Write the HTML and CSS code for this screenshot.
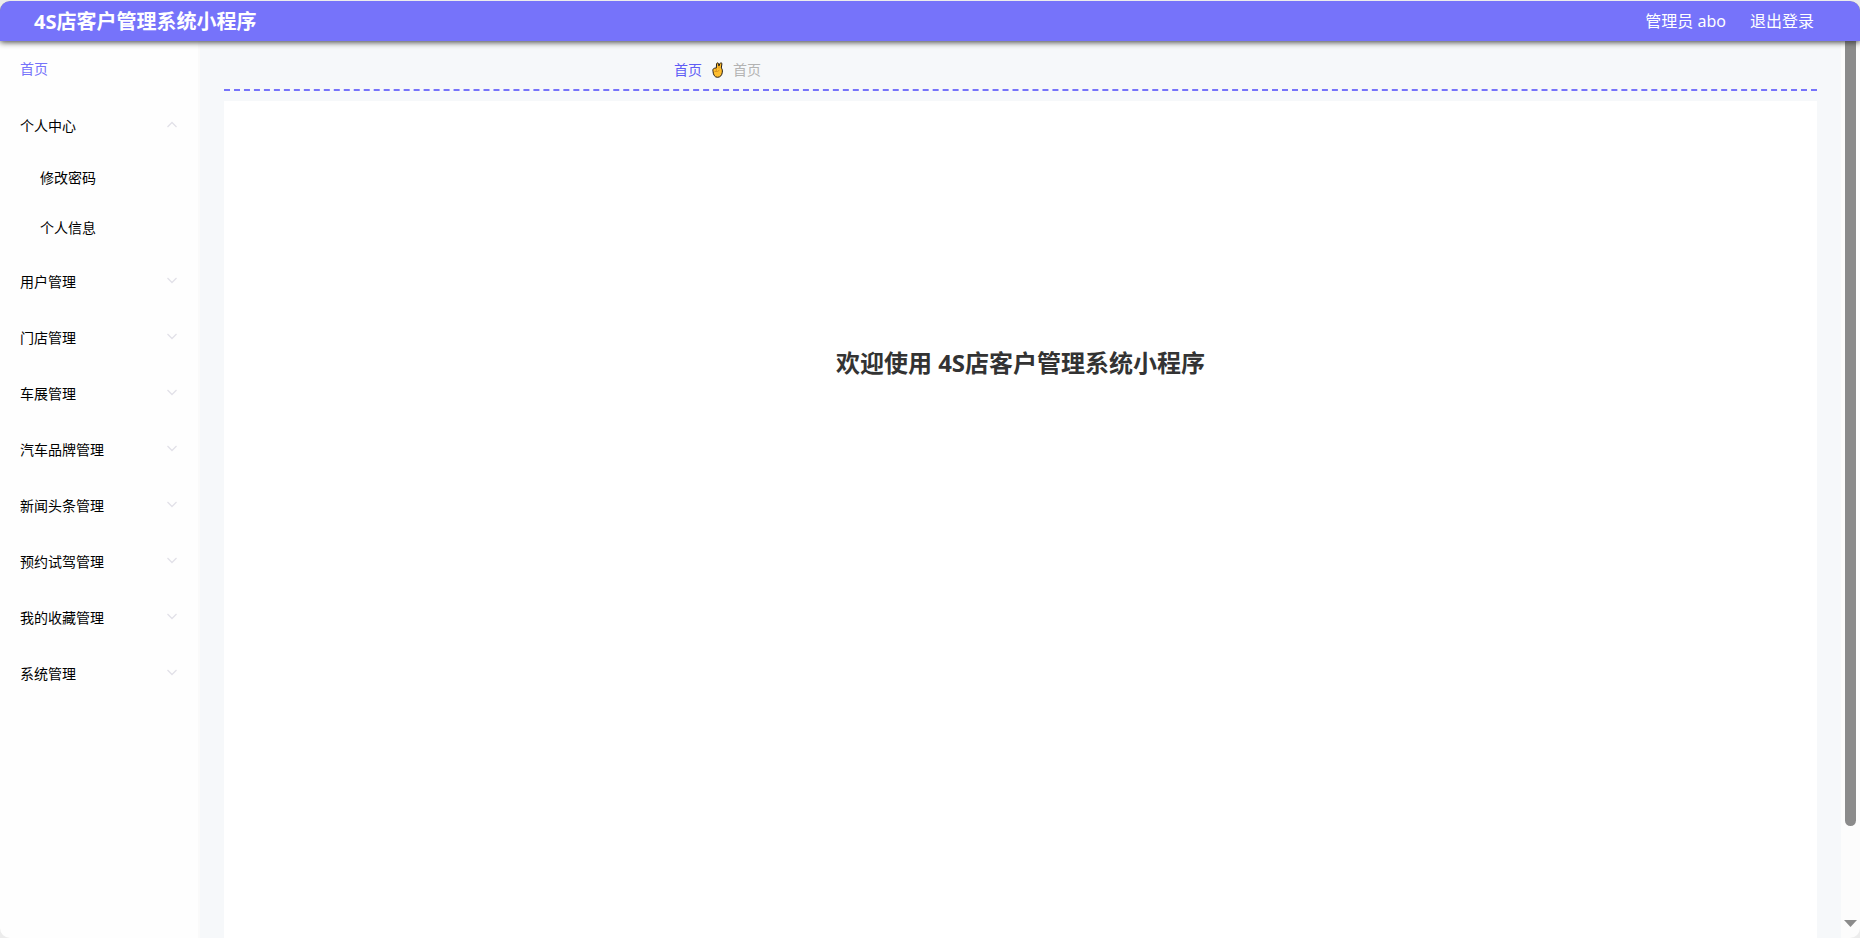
FILE: index.html
```html
<!DOCTYPE html>
<html lang="zh-CN">
<head>
<meta charset="utf-8">
<title>4S店客户管理系统小程序</title>
<link rel="stylesheet" href="styles.css">
</head>
<body>
<svg class="sprite" aria-hidden="true">
  <symbol id="down" viewBox="0 0 12 12"><path d="M1.500 3 6 7.500 10.500 3" fill="none" stroke="currentColor" stroke-width="1.300"/></symbol>
  <symbol id="up" viewBox="0 0 12 12"><path d="M1.500 8 6 3.500 10.500 8" fill="none" stroke="currentColor" stroke-width="1.300"/></symbol>
</svg>
<div class="window">
  <header class="topbar">
    <h1 class="brand">4S店客户管理系统小程序</h1>
    <div class="account">
      <span>管理员 abo</span>
      <button class="logout" type="button">退出登录</button>
    </div>
  </header>
  <div class="body">
    <nav class="sidebar">
      <a class="item active" href="#">首页</a>
      <button class="item" type="button" aria-expanded="true">个人中心<svg class="chevron"><use href="#up"/></svg></button>
      <a class="subitem" href="#">修改密码</a>
      <a class="subitem" href="#">个人信息</a>
      <button class="item" type="button">用户管理<svg class="chevron"><use href="#down"/></svg></button>
      <button class="item" type="button">门店管理<svg class="chevron"><use href="#down"/></svg></button>
      <button class="item" type="button">车展管理<svg class="chevron"><use href="#down"/></svg></button>
      <button class="item" type="button">汽车品牌管理<svg class="chevron"><use href="#down"/></svg></button>
      <button class="item" type="button">新闻头条管理<svg class="chevron"><use href="#down"/></svg></button>
      <button class="item" type="button">预约试驾管理<svg class="chevron"><use href="#down"/></svg></button>
      <button class="item" type="button">我的收藏管理<svg class="chevron"><use href="#down"/></svg></button>
      <button class="item" type="button">系统管理<svg class="chevron"><use href="#down"/></svg></button>
    </nav>
    <main class="content">
      <div class="breadcrumb">
        <a class="crumb" href="#">首页</a>
        <svg class="hand" viewBox="0 0 11 16" aria-hidden="true">
          <path d="M1 9.500C.6 7.800 1 6.500 2.600 6.200L4.300 6 4.600 1.800C4.800.6 6.300.6 6.500 1.600L6.900 4 8 1.400C8.500.4 10 .7 9.900 1.900L9.300 6C10.300 7 10.500 8.400 10.300 10.200 10 13.200 8.300 15.300 5.500 15.300 2.600 15.300 1.300 12.700 1 9.500Z" fill="#ffbe2e" stroke="#241c14"/>
          <path d="M7 4v2.500M4.300 6v3M2.500 9.500h3l2-1.500" fill="none" stroke="#d08a1c" stroke-width=".8"/>
        </svg>
        <span class="current">首页</span>
      </div>
      <section class="panel"><h2 class="welcome">欢迎使用 4S店客户管理系统小程序</h2></section>
    </main>
    <div class="scrollbar" aria-hidden="true">
      <div class="track"><div class="thumb"></div></div>
      <svg class="arrow" viewBox="0 0 13 7"><path d="M0 0h13L6.500 7z" fill="#8b8b8b"/></svg>
    </div>
  </div>
</div>
</body>
</html>
```
FILE: styles.css
```css
* { box-sizing: border-box; }
body {
  margin: 0;
  background: #ececec;
  color: #000;
  font: 14px/20px "Noto Sans", "Noto Sans CJK SC", sans-serif;
}
a { text-decoration: none; color: inherit; }
button { border: 0; padding: 0; background: none; color: inherit; font: inherit; text-align: left; cursor: pointer; }
.sprite { position: absolute; width: 0; height: 0; }
.window {
  display: flex;
  flex-direction: column;
  height: 100vh;
  border-top: 1px solid #ececec;
  border-radius: 10px;
  overflow: hidden;
}
.topbar {
  display: flex;
  align-items: center;
  justify-content: space-between;
  flex: none;
  height: 40px;
  padding: 0 46px 0 34px;
  border-radius: 10px 10px 0 0;
  background: #7673fa;
  color: #fff;
  box-shadow: 0 1px 6px #333;
  z-index: 1;
}
.brand { margin: 0; padding-top: 2px; font-size: 20px; line-height: 38px; }
.account { display: flex; gap: 24px; font-size: 16px; }
.body { display: flex; flex: 1; min-height: 0; }
.sidebar {
  display: flex;
  flex-direction: column;
  flex: none;
  width: 200px;
  border-right: 2px solid #fafafa;
  background: #fefefe;
}
.item, .subitem { display: flex; align-items: center; justify-content: space-between; }
.item { height: 56px; padding: 2px 20px 0; }
.subitem { height: 50px; padding: 0 40px; }
.active { padding-top: 0; color: #7673fa; }
.chevron { width: 12px; height: 12px; margin-bottom: 3px; color: #e2e1e8; }
.content {
  display: flex;
  flex-direction: column;
  flex: 1;
  padding: 0 24px;
  background: #f6f8fa;
}
.breadcrumb {
  display: flex;
  align-items: center;
  gap: 10px;
  flex: none;
  height: 50px;
  margin-bottom: 10px;
  padding: 10px 0 0 450px;
  border-bottom: 2px dashed #7673fa;
}
.crumb { color: #5f5cf5; }
.hand { width: 11px; height: 16px; }
.current { color: #b3b3b3; }
.panel { flex: 1; background: #fff; }
.welcome { margin: 244px 0 0; color: #333; font-size: 24px; line-height: 36px; text-align: center; }
.scrollbar {
  display: flex;
  flex-direction: column;
  align-items: center;
  flex: none;
  width: 19px;
  padding-bottom: 11px;
  background: #fcfcfc;
}
.track { flex: 1; }
.thumb { width: 11px; height: 89.3%; border-radius: 0 0 6px 6px; background: #8b8b8b; }
.arrow { width: 13px; height: 7px; }
```
